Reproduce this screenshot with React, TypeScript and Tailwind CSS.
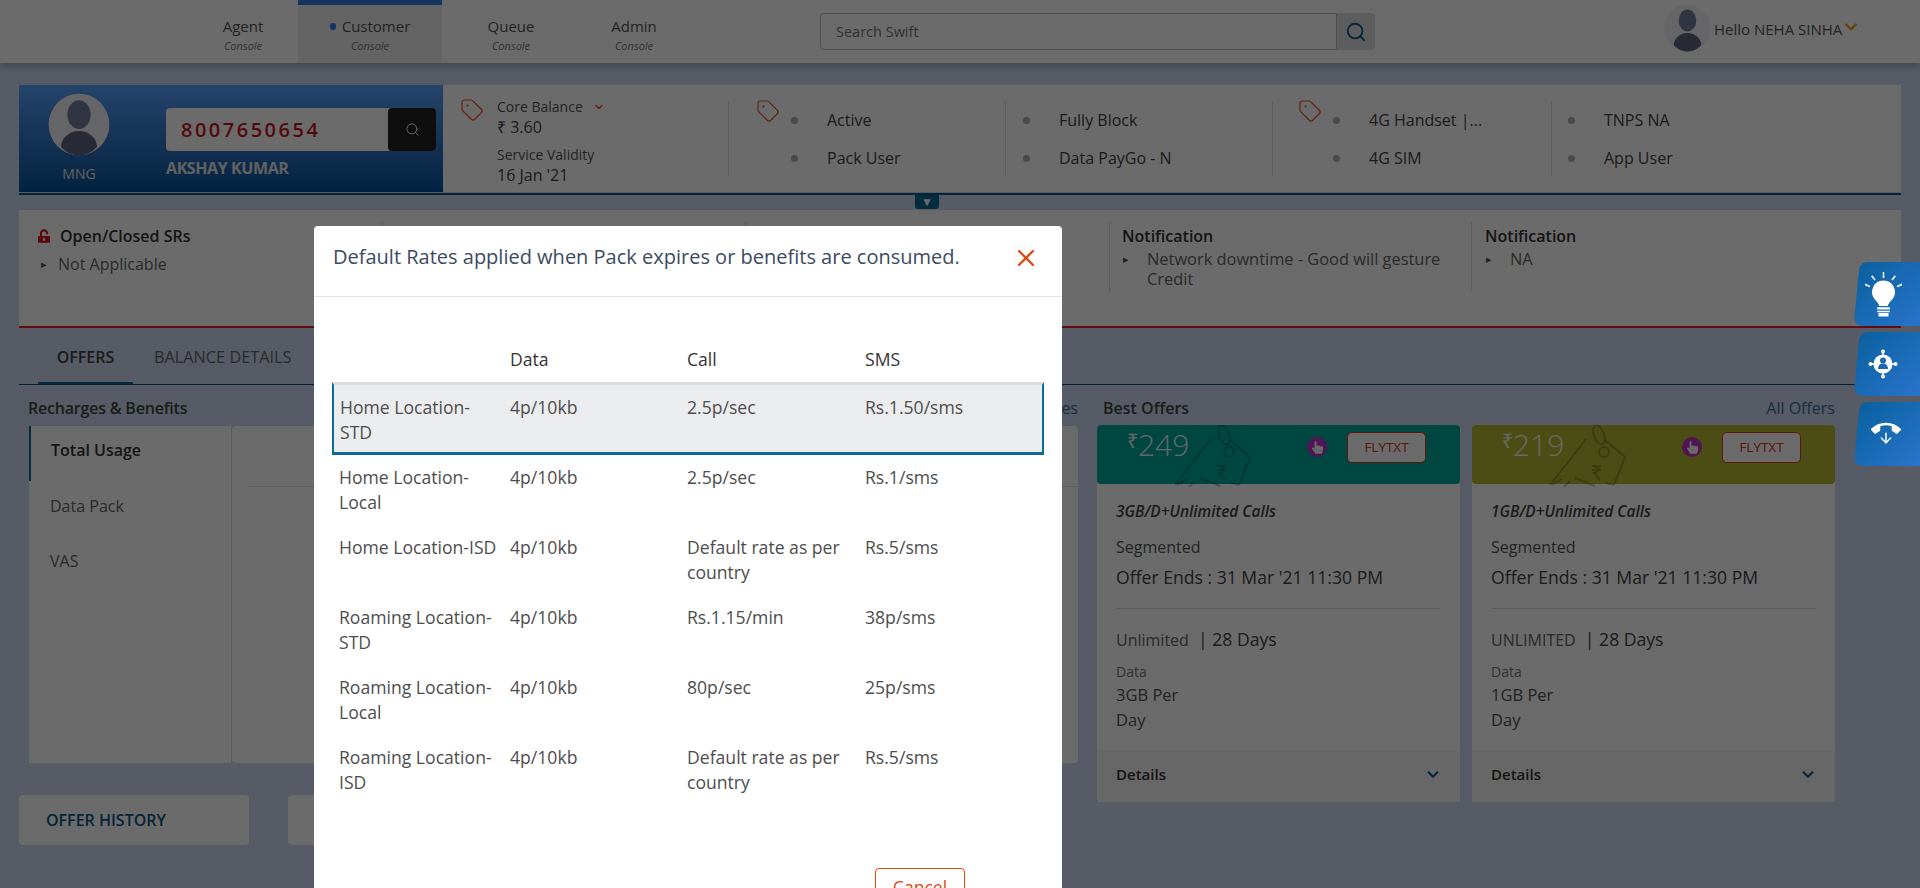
import { Tag, Search, X, ChevronDown, ArrowDown } from 'lucide-react';
import { FaChevronDown, FaHandPointer, FaUnlockAlt } from 'react-icons/fa';
import { MdCallEnd } from 'react-icons/md';

const rates = [
  { name: 'Home Location-STD', data: '4p/10kb', call: '2.5p/sec', sms: 'Rs.1.50/sms' },
  { name: 'Home Location-Local', data: '4p/10kb', call: '2.5p/sec', sms: 'Rs.1/sms' },
  { name: 'Home Location-ISD', data: '4p/10kb', call: 'Default rate as per country', sms: 'Rs.5/sms' },
  { name: 'Roaming Location-STD', data: '4p/10kb', call: 'Rs.1.15/min', sms: '38p/sms' },
  { name: 'Roaming Location-Local', data: '4p/10kb', call: '80p/sec', sms: '25p/sms' },
  { name: 'Roaming Location-ISD', data: '4p/10kb', call: 'Default rate as per country', sms: 'Rs.5/sms' },
];

const offers = [
  { price: '249', band: 'bg-[#00a99d]', title: '3GB/D+Unlimited Calls', kind: 'Unlimited', amount: '3GB Per' },
  { price: '219', band: 'bg-[#b5b832]', title: '1GB/D+Unlimited Calls', kind: 'UNLIMITED', amount: '1GB Per' },
];

function Avatar({ className }: { className: string }) {
  return (
    <svg viewBox="0 0 48 48" preserveAspectRatio="none" className={className}>
      <circle cx="24" cy="24" r="23.5" fill="#f2f4f8" />
      <ellipse cx="24" cy="16.5" rx="9" ry="11" fill="#747e9c" />
      <path d="M24 29c-8 0-14 6-14 12 3.500 4 8.500 6.500 14 6.500S34.500 45 38 41c0-6-6-12-14-12z" fill="#5f6680" />
    </svg>
  );
}

function Dot({ text }: { text: string }) {
  return (
    <div className="flex items-center h-[38px]">
      <span className="w-[7px] h-[7px] rounded-full bg-[#b0b0b0]" />
      <span className="ml-[29px] text-[16px] text-[#444]">{text}</span>
    </div>
  );
}

function NavItem({ label, width, active }: { label: string; width: string; active?: boolean }) {
  return (
    <div className={`${width} h-[63px] flex flex-col items-center ${active ? 'bg-[#eeeeee] border-t-[5px] border-[#2f7fe0] pt-[11px]' : 'pt-[16px]'}`}>
      <div className="flex items-center text-[15px] leading-[20px] text-[#555]">
        {active && <span className="w-[6px] h-[7px] rounded-full bg-[#2b7bf0] mr-[6px]" />}
        {label}
      </div>
      <div className="text-[11px] italic leading-[16px] mt-[2px] text-[#777]">Console</div>
    </div>
  );
}

function PriceTagMark() {
  return (
    <svg viewBox="0 0 76 62" className="absolute left-[78px] top-0 w-[76px] h-[62px]" fill="none" stroke="#000" strokeOpacity="0.22" strokeWidth="2">
      <ellipse cx="49" cy="10" rx="5" ry="10" transform="rotate(-20 49 10)" />
      <path d="M36 14L0 60M55 15L75 32 64 60" />
      <circle cx="54" cy="27" r="5" />
      <path d="M42 41h9M42 45h9M44 41c5 0 5 7 0 7l6 7M2 60l10-6M14 62l6-6M25 53l20 8M56 58l8 2" />
    </svg>
  );
}

function OfferCard({ price, band, title, kind, amount }: (typeof offers)[number]) {
  return (
    <div className="w-[363px] h-[377px] flex flex-col bg-white rounded-t-[4px]">
      <div className={`${band} relative h-[59px] rounded-[4px] flex`}>
        <PriceTagMark />
        <div className="ml-[30px] mt-[1px] flex items-start text-white/90 font-light">
          <span className="text-[20px] leading-[30px] font-normal">₹</span>
          <span className="text-[30px] leading-[38px]">{price}</span>
        </div>
        <span className="absolute left-[210px] top-[12px] w-[20px] h-[20px] rounded-full bg-[#c030c8] flex items-center justify-center">
          <FaHandPointer className="text-white w-[11px] h-[13px]" />
        </span>
        <span className="absolute left-[250px] top-[7px] w-[79px] h-[31px] rounded-[5px] border border-[#e03a1c] bg-white text-[#d8341c] text-[13.5px] flex items-center justify-center">
          FLYTXT
        </span>
      </div>
      <div className="flex-1 px-[19px] pt-[18px]">
        <div className="text-[15.4px] leading-[20px] italic font-semibold text-[#444]">{title}</div>
        <div className="text-[16px] leading-[20px] mt-[15px] text-[#555]">Segmented</div>
        <div className="text-[17.6px] leading-[22px] mt-[9px] text-[#444]">Offer Ends : 31 Mar '21 11:30 PM</div>
        <div className="h-px bg-[#e3e3e3] mt-[20px]" />
        <div className="text-[17.6px] leading-[22px] mt-[19px] text-[#444]">
          <span className="text-[16px] text-[#666]">{kind}</span> &nbsp;| 28 Days
        </div>
        <div className="text-[14px] leading-[18px] mt-[12px] text-[#777]">Data</div>
        <div className="text-[16.5px] leading-[25px] mt-[1px] text-[#555]">{amount}<br />Day</div>
      </div>
      <div className="h-[51px] bg-[#f6f6f6] px-[19px] pb-[4px] flex items-center justify-between">
        <span className="text-[15px] font-semibold text-[#333]">Details</span>
        <FaChevronDown className="w-[16px] h-[13px] text-[#0a5a80]" />
      </div>
    </div>
  );
}

function SideButton({ children }: { children: React.ReactNode }) {
  return (
    <div className="relative w-[66px] h-[64px] flex items-center justify-center pr-[8px]">
      <svg viewBox="0 0 66 64" className="absolute inset-0 w-full h-full">
        <defs>
          <linearGradient id="sideBtn" x1="0" y1="0" x2="1" y2="1">
            <stop offset="0" stopColor="#08609c" />
            <stop offset="1" stopColor="#2a74cc" />
          </linearGradient>
        </defs>
        <path d="M14 0H66V64H10C3 64 0 60 .5 54L5 8C6 3 9 0 14 0Z" fill="url(#sideBtn)" />
      </svg>
      <div className="relative">{children}</div>
    </div>
  );
}

export default function App() {
  return (
    <div className="relative w-[1920px] h-[888px] overflow-hidden bg-[#cdd9f0] font-['Open_Sans',sans-serif]">
      <header className="h-[63px] bg-white flex items-start shadow-[0_2px_8px_rgba(0,0,0,0.3)]">
        <div className="flex ml-[188px]">
          <NavItem label="Agent" width="w-[110px]" />
          <NavItem label="Customer" width="w-[144px]" active />
          <NavItem label="Queue" width="w-[138px]" />
          <NavItem label="Admin" width="w-[108px]" />
        </div>
        <div className="flex ml-[132px] mt-[13px] w-[555px] h-[37px]">
          <div className="flex-1 border border-[#bbb] rounded-l-[4px] bg-white px-[15px] text-[14.5px] leading-[35px] text-[#777]">Search Swift</div>
          <div className="w-[38px] bg-[#dedede] rounded-r-[4px] flex items-center justify-center">
            <Search className="w-[22px] h-[22px] text-[#0a5f8a]" strokeWidth={2} />
          </div>
        </div>
        <Avatar className="w-[47px] h-[48px] ml-[289px] mt-[4px]" />
        <div className="ml-[3px] mt-[19px] text-[15px] leading-[20px] text-[#555] whitespace-nowrap">Hello NEHA SINHA</div>
        <FaChevronDown className="w-[18px] h-[14px] mt-[20px] text-[#f09a16]" />
      </header>

      <main className="px-[19px] pt-[22px]">
        <section className="h-[107px] bg-white flex">
          <div className="w-[424px] flex bg-gradient-to-b from-[#5aa2ff] to-[#02539a]">
            <div className="w-[120px] flex flex-col items-center pt-[8px]">
              <Avatar className="w-[62px] h-[63px]" />
              <div className="mt-[8px] text-[14px] leading-[20px] text-[#e4e4e4]">MNG</div>
            </div>
            <div className="pt-[23px] ml-[27px]">
              <div className="flex w-[270px] h-[43px] rounded-[4px] bg-white">
                <div className="flex-1 pl-[15px] text-[20px] leading-[43px] tracking-[2.5px] font-semibold text-[#c8191f]">8007650654</div>
                <div className="w-[48px] rounded-[4px] bg-[#222] flex items-center justify-center">
                  <Search className="w-[15px] h-[15px] text-white" strokeWidth={1.5} />
                </div>
              </div>
              <div className="mt-[5px] text-[16px] leading-[24px] font-bold tracking-[-0.4px] text-[#e8e8e8]">AKSHAY KUMAR</div>
            </div>
          </div>
          <div className="w-[285px] flex pl-[17px] pt-[12px]">
            <Tag className="w-[24px] h-[24px] mt-[1px] text-[#e8501e]" strokeWidth={1.2} />
            <div className="ml-[13px] text-[#444]">
              <div className="flex items-center text-[14px] leading-[20px] text-[#555]">
                Core Balance
                <ChevronDown className="w-[12px] h-[12px] ml-[10px] text-[#ff3a20]" strokeWidth={2.5} />
              </div>
              <div className="text-[16px] leading-[20px]">₹ 3.60</div>
              <div className="text-[14px] leading-[20px] mt-[8px] text-[#555]">Service Validity</div>
              <div className="text-[16px] leading-[20px]">16 Jan '21</div>
            </div>
          </div>
          <div className="w-[277px] mt-[16px] h-[75px] border-l border-[#ddd] flex pl-[27px]">
            <Tag className="w-[24px] h-[24px] -mt-[2px] text-[#e8501e]" strokeWidth={1.2} />
            <div className="ml-[11px]"><Dot text="Active" /><Dot text="Pack User" /></div>
          </div>
          <div className="w-[267px] mt-[16px] h-[75px] border-l border-[#ddd] pl-[17px]">
            <Dot text="Fully Block" /><Dot text="Data PayGo - N" />
          </div>
          <div className="w-[279px] mt-[16px] h-[75px] border-l border-[#ddd] flex pl-[25px]">
            <Tag className="w-[24px] h-[24px] -mt-[2px] text-[#e8501e]" strokeWidth={1.2} />
            <div className="ml-[11px]"><Dot text="4G Handset |..." /><Dot text="4G SIM" /></div>
          </div>
          <div className="flex-1 mt-[16px] h-[75px] border-l border-[#ddd] pl-[16px]">
            <Dot text="TNPS NA" /><Dot text="App User" />
          </div>
        </section>
        <div className="h-[2px] mt-[1px] bg-[#0a5a80]" />
        <div className="h-[15px] pl-[896px]">
          <div className="w-[24px] h-[14px] bg-[#0a6a9a] rounded-b-[3px] flex items-center justify-center text-white text-[12px] leading-none">▼</div>
        </div>

        <section className="h-[118px] bg-white flex border-b-[2px] border-[#e8202a]">
          <div className="w-[362px] pl-[19px] pt-[16px]">
            <div className="flex items-center text-[16px] font-semibold leading-[20px] text-[#333]">
              <FaUnlockAlt className="w-[12px] h-[14px] mr-[10px] text-[#d30d18]" />
              Open/Closed SRs
            </div>
            <div className="flex items-center mt-[8px] text-[16px] leading-[20px] text-[#666]">
              <span className="ml-[3px] mr-[11px] text-[11px] text-[#555]">▸</span>
              Not Applicable
            </div>
          </div>
          <div className="w-[364px] border-l border-[#ddd] mt-[12px] h-[70px]" />
          <div className="w-[364px] border-l border-[#ddd] mt-[12px] h-[70px]" />
          <div className="w-[362px] border-l border-[#ddd] mt-[12px] h-[70px] pl-[12px] pt-[4px]">
            <div className="text-[16px] font-semibold leading-[20px] text-[#333]">Notification</div>
            <div className="flex mt-[3px] text-[16.4px] leading-[20px] text-[#666]">
              <span className="ml-[1px] mr-[18px] text-[11px] leading-[20px] text-[#555]">▸</span>
              <span className="w-[300px]">Network downtime - Good will gesture Credit</span>
            </div>
          </div>
          <div className="flex-1 border-l border-[#ddd] mt-[12px] h-[70px] pl-[13px] pt-[4px]">
            <div className="text-[16px] font-semibold leading-[20px] text-[#333]">Notification</div>
            <div className="flex mt-[3px] text-[16.4px] leading-[20px] text-[#666]">
              <span className="ml-[1px] mr-[18px] text-[11px] leading-[20px] text-[#555]">▸</span>
              NA
            </div>
          </div>
        </section>

        <div className="mt-[7px] h-[50px] border-b border-[#0a4a70] flex pl-[19px] items-stretch">
          <div className="w-[95px] pb-[4px] flex items-center justify-center border-b-[2px] border-[#0a6a9a] text-[16px] font-semibold text-[#444]">OFFERS</div>
          <div className="ml-[21px] pb-[4px] flex items-center text-[16.3px] text-[#666]">BALANCE DETAILS</div>
        </div>

        <div className="flex">
          <div className="w-[1059px]">
            <div className="flex justify-between pl-[9px] pt-[12px] h-[41px] text-[16px] leading-[22px]">
              <span className="font-semibold tracking-[-0.2px] text-[#444]">Recharges &amp; Benefits</span>
              <span className="text-[#3f6f96]">All Recharges</span>
            </div>
            <div className="flex h-[337px] ml-[10px]">
              <div className="w-[202px] bg-white text-[16px] text-[#666]">
                <div className="h-[55px] pl-[20px] pb-[8px] flex items-center border-l-[2px] border-[#0a6a9a] font-semibold text-[#333]">Total Usage</div>
                <div className="h-[55px] pl-[21px] pb-[6px] flex items-center">Data Pack</div>
                <div className="h-[55px] pl-[21px] pb-[6px] flex items-center">VAS</div>
              </div>
              <div className="ml-px flex-1 bg-white rounded-[4px] pl-[17px]">
                <div className="h-[61px] border-b border-[#e3e3e3]" />
              </div>
            </div>
            <div className="flex mt-[32px] gap-[39px]">
              <div className="w-[230px] h-[50px] bg-white rounded-[4px] pl-[27px] flex items-center text-[16px] font-semibold text-[#0a5a80]">OFFER HISTORY</div>
              <div className="w-[230px] h-[50px] bg-white rounded-[4px]" />
            </div>
          </div>
          <div className="w-[738px] ml-[19px]">
            <div className="flex justify-between pl-[6px] pt-[12px] h-[40px] text-[16px] leading-[22px]">
              <span className="font-semibold text-[#444]">Best Offers</span>
              <span className="text-[#3f6f96]">All Offers</span>
            </div>
            <div className="flex gap-[12px]">
              {offers.map((offer) => <OfferCard key={offer.price} {...offer} />)}
            </div>
          </div>
        </div>
      </main>

      {/* backdrop + dialog */}
      <div className="absolute inset-0 bg-black/[0.58]" />

      <div className="absolute right-0 top-[262px] flex flex-col gap-[6px]">
        <SideButton>
          <svg viewBox="0 0 37 45" className="w-[37px] h-[45px]" fill="#fff">
            <path d="M18.500 8.500a11.500 11.500 0 0 0-8 19.700c1.600 1.700 3.300 3.600 3.800 5.800h8.400c.5-2.200 2.200-4.100 3.800-5.800a11.500 11.500 0 0 0-8-19.700z" />
            <path d="M12.200 35.200h12.600v2.300H12.200zM12.200 38.800h12.600v1.400H12.200zM13.500 41h10v3.500h-10z" />
            <path d="M18.500 0v6M6.700 3.700L10 8M30.300 3.700L27 8M0 12.300l5 2.300M37 12.300l-5 2.300" stroke="#fff" strokeWidth="1.500" />
          </svg>
        </SideButton>
        <SideButton>
          <svg viewBox="0 0 30 30" className="w-[30px] h-[30px]">
            <circle cx="15" cy="15" r="9.500" fill="#fff" />
            <path d="M15 3v3M15 24v3M3 15h3M24 15h3" stroke="#fff" strokeWidth="1.500" />
            <circle cx="15" cy="2.500" r="2" fill="#fff" />
            <circle cx="15" cy="27.500" r="2" fill="#fff" />
            <circle cx="2.500" cy="15" r="2" fill="#fff" />
            <circle cx="27.500" cy="15" r="2" fill="#fff" />
            <circle cx="15" cy="11.500" r="3" fill="#1a68b0" />
            <path d="M10 20c0-3.500 2-5.500 5-5.500s5 2 5 5.500z" fill="#1a68b0" />
          </svg>
        </SideButton>
        <SideButton>
          <div className="relative w-[30px] h-[28px] translate-x-[3px]">
            <MdCallEnd className="absolute -top-[6px] left-0 w-[30px] h-[30px] text-white" />
            <ArrowDown className="absolute top-[10px] left-[7px] w-[16px] h-[16px] text-white" strokeWidth={2.2} />
          </div>
        </SideButton>
      </div>

      <div className="absolute left-[314px] top-[226px] w-[748px] h-[700px] bg-white rounded-[4px]">
        <div className="h-[71px] border-b border-[#e5e5e5] pb-[9px] flex items-center justify-between pl-[19px] pr-[22px]">
          <h2 className="text-[20px] font-medium text-[#3d4a63]">Default Rates applied when Pack expires or benefits are consumed.</h2>
          <X className="w-[28px] h-[28px] mt-[2px] text-[#dc4a12]" strokeWidth={2} />
        </div>
        <div className="mx-[18px] mt-[47px]">
          <div className="grid grid-cols-[178px_177px_178px_1fr] h-[38px] text-[17.6px] text-[#333] font-medium leading-[30px]">
            <span />
            <span>Data</span>
            <span>Call</span>
            <span>SMS</span>
          </div>
          {rates.map((row, index) => (
            <div
              key={row.name}
              className={
                index === 0
                  ? 'grid grid-cols-[176px_177px_178px_1fr] h-[73px] -mb-[3px] pt-[10px] text-[17.6px] leading-[25px] text-[#4d4d4d] bg-[#ebecee] border-x-[2px] border-b-[3px] border-[#0a6a9a] border-t-[3px] border-t-[#ddd] relative z-10'
                  : 'grid grid-cols-[178px_177px_178px_1fr] h-[70px] pt-[13px] text-[17.6px] leading-[25px] text-[#4d4d4d]'
              }
            >
              <span className={index === 0 ? 'pl-[6px] pr-[14px]' : 'pl-[7px] pr-[4px]'}>{row.name}</span>
              <span>{row.data}</span>
              <span className="pr-[10px]">{row.call}</span>
              <span>{row.sms}</span>
            </div>
          ))}
        </div>
        <div className="absolute left-[561px] top-[642px] w-[90px] h-[38px] rounded-[4px] border border-[#dc4a12] text-[17.6px] text-[#dc4a12] flex items-center justify-center">Cancel</div>
      </div>
    </div>
  );
}
